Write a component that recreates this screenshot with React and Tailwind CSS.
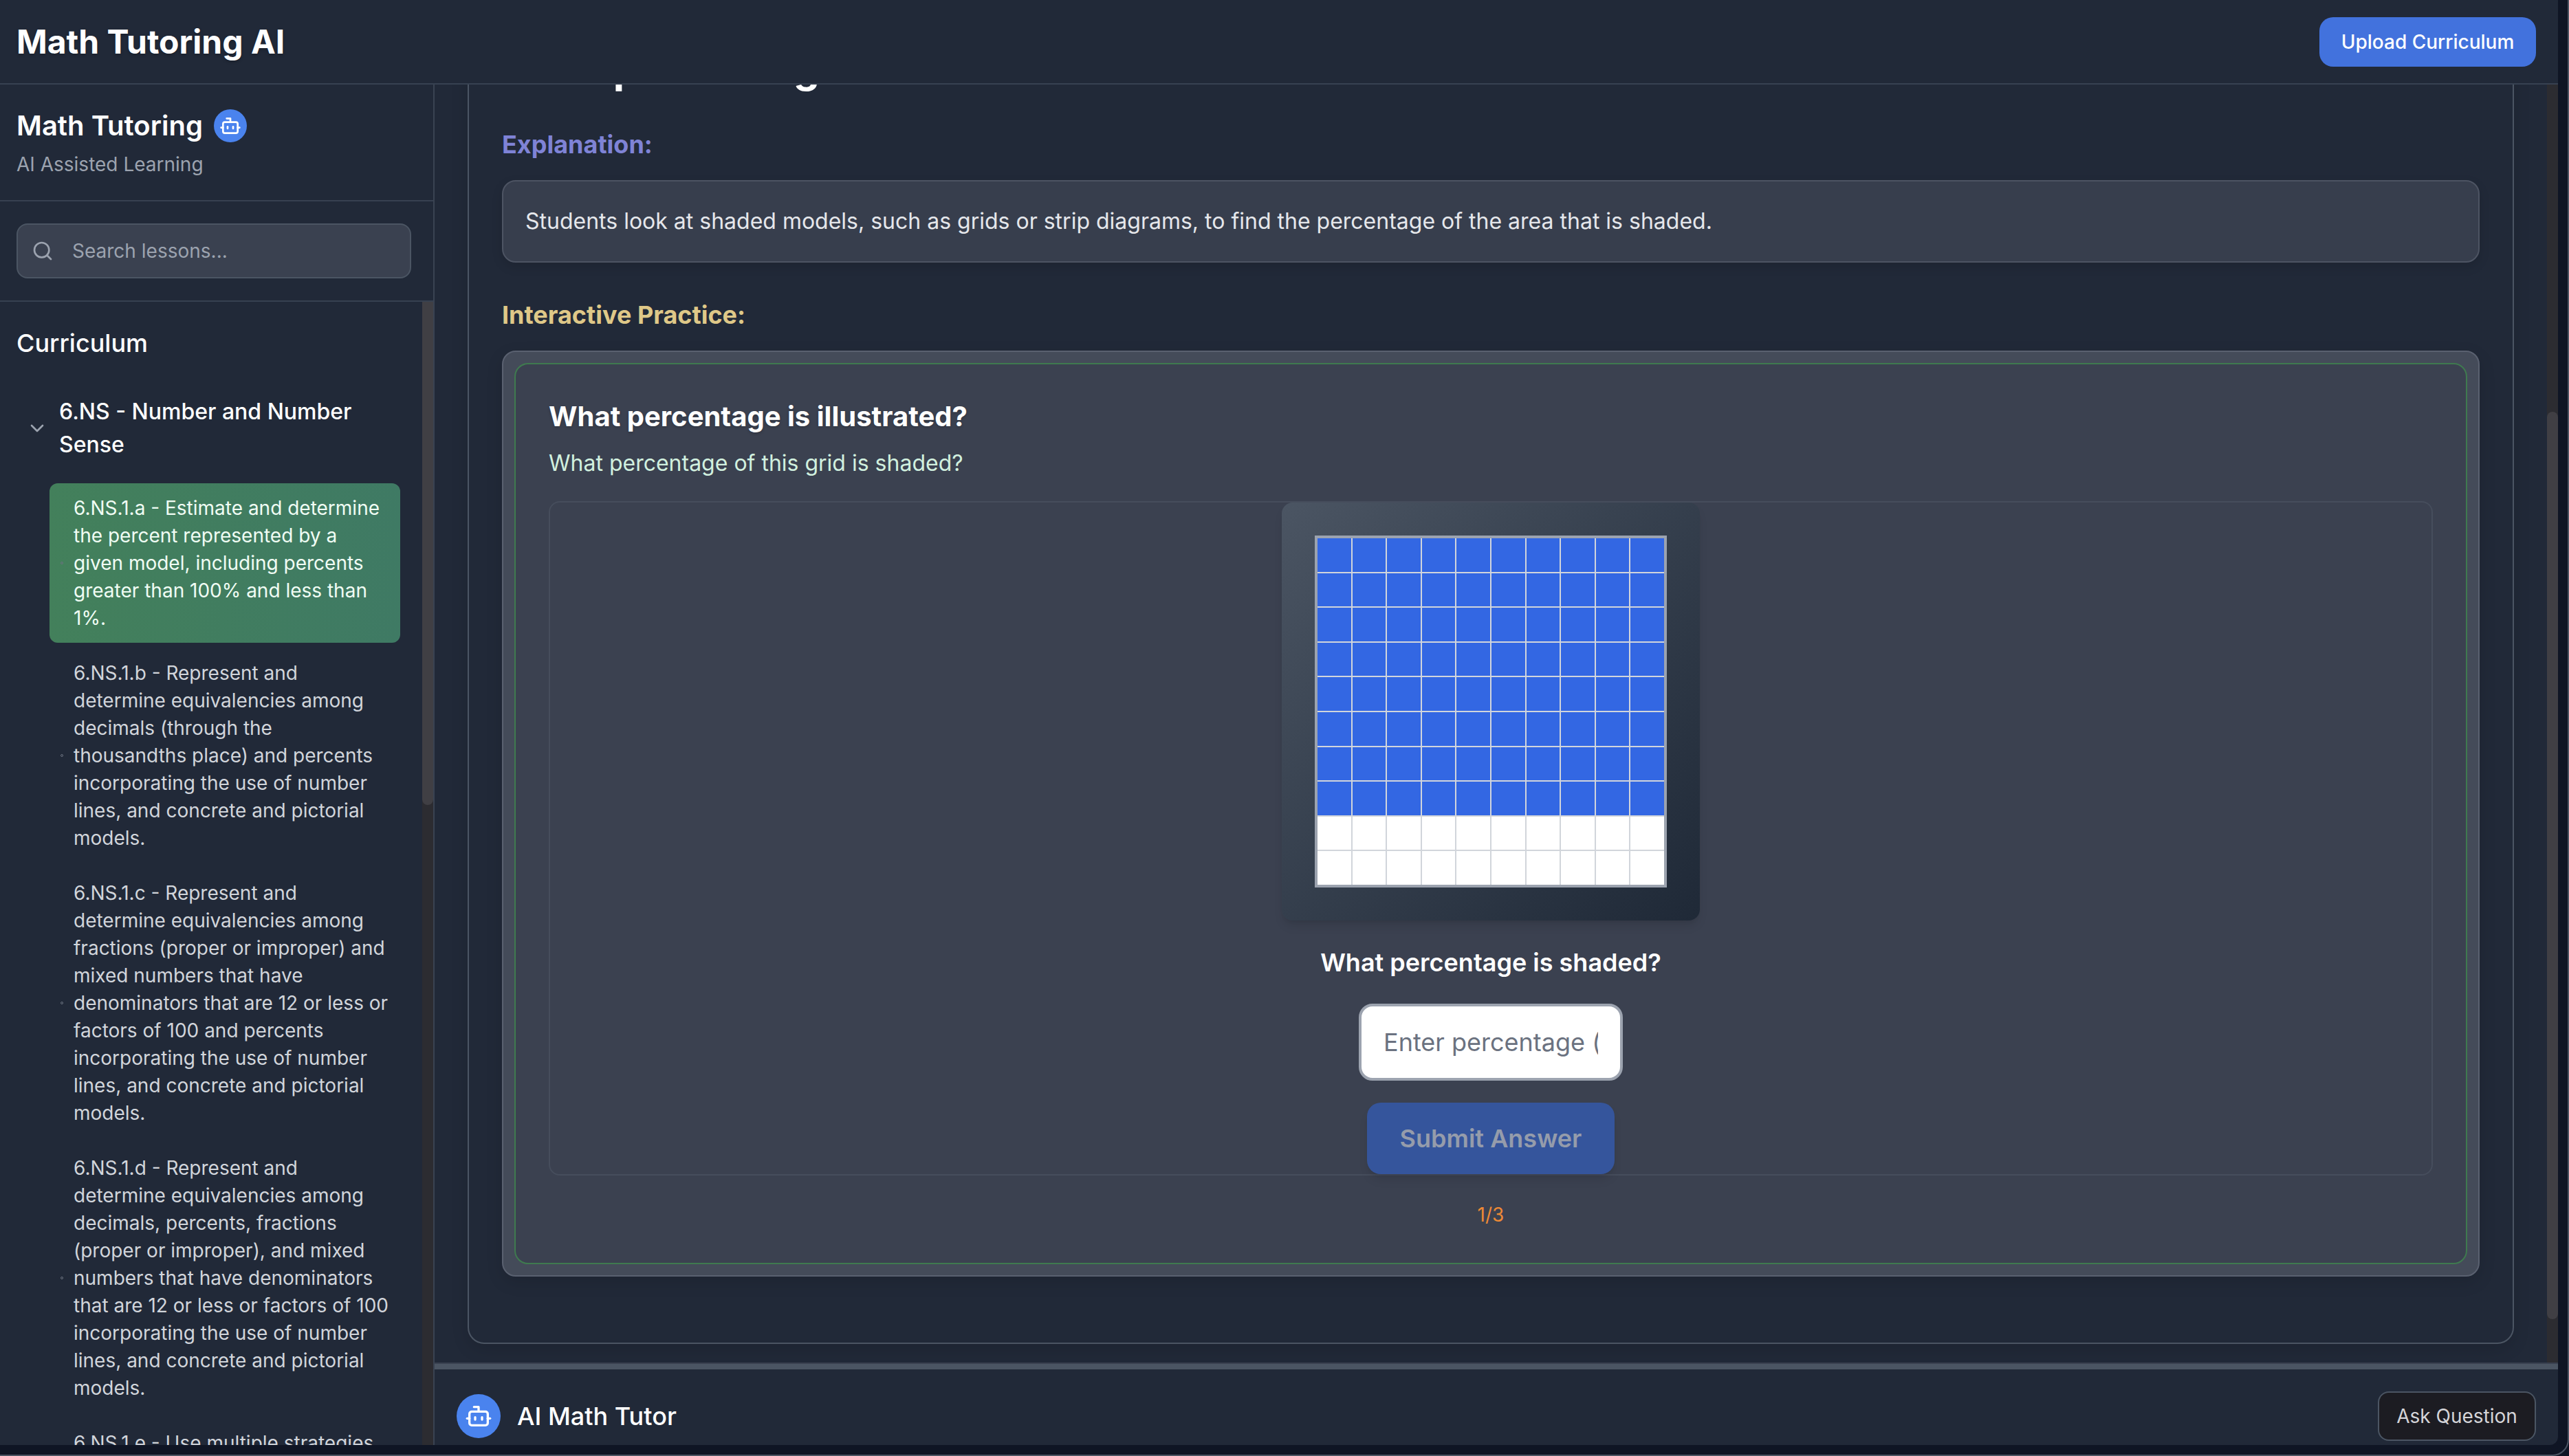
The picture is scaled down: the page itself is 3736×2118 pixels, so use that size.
import React from "react";
import { Bot, ChevronDown, Search } from "lucide-react";

const lessons = [
  "6.NS.1.a - Estimate and determine the percent represented by a given model, including percents greater than 100% and less than 1%.",
  "6.NS.1.b - Represent and determine equivalencies among decimals (through the thousandths place) and percents incorporating the use of number lines, and concrete and pictorial models.",
  "6.NS.1.c - Represent and determine equivalencies among fractions (proper or improper) and mixed numbers that have denominators that are 12 or less or factors of 100 and percents incorporating the use of number lines, and concrete and pictorial models.",
  "6.NS.1.d - Represent and determine equivalencies among decimals, percents, fractions (proper or improper), and mixed numbers that have denominators that are 12 or less or factors of 100 incorporating the use of number lines, and concrete and pictorial models.",
  "6.NS.1.e - Use multiple strategies to compare and order decimals, fractions and percents.",
];

const cells = Array.from({ length: 100 }, (_, i) => i);

const BotBadge = ({ box, icon }) => (
  <span className={`flex shrink-0 items-center justify-center rounded-full bg-[#4a83ee] text-white ${box}`}>
    <Bot className={icon} />
  </span>
);

const Sidebar = () => (
  <aside className="flex w-[632px] shrink-0 flex-col border-r-2 border-[#3a4352]">
    <div className="h-[170px] shrink-0 border-b-2 border-[#374151] pl-6 pt-8">
      <div className="flex h-14 items-center gap-4">
        <h2 className="text-[40px] leading-[56px] font-semibold text-white">Math Tutoring</h2>
        <BotBadge box="h-12 w-12" icon="h-8 w-8" />
      </div>
      <p className="mt-2 text-[28px] leading-10 text-[#9ca3af]">AI Assisted Learning</p>
    </div>

    <div className="h-[146px] shrink-0 border-b-2 border-[#374151] pb-8 pl-6 pr-8 pt-8">
      <div className="flex h-20 items-center gap-[27px] rounded-2xl border-2 border-[#4b5563] bg-[#3a4150] pl-5">
        <Search className="h-8 w-8 shrink-0 text-[#9ca3af]" />
        <span className="text-[28px] text-[#9ca3af]">Search lessons...</span>
      </div>
    </div>

    <div className="flex min-h-0 flex-1">
      <div className="min-w-0 flex-1 overflow-hidden">
        <h3 className="pl-6 pt-9 text-[36px] leading-[48px] font-medium text-white">Curriculum</h3>
        <div className="mt-[52px] flex items-center gap-4 pl-[38px] pr-4">
          <ChevronDown className="h-8 w-8 shrink-0 text-[#9ca3af]" />
          <span className="text-[32px] leading-[48px] font-medium text-white">6.NS - Number and Number Sense</span>
        </div>
        <ul className="mt-8 flex flex-col gap-2 pl-[72px] pr-8">
          {lessons.map((lesson, i) => (
            <li
              key={lesson}
              className={`flex items-center gap-[15px] rounded-xl py-4 pl-4 pr-[15px] text-[28px] leading-10 ${
                i === 0
                  ? "bg-gradient-to-r from-[#43805b] to-[#3f7a64] text-[#f0fdf4]"
                  : "text-[#d1d5db]"
              }`}
            >
              <span className="h-1 w-1 shrink-0 rounded-full border border-[#6b7280]" />
              <span>{lesson}</span>
            </li>
          ))}
        </ul>
      </div>
      <div className="w-4 shrink-0 bg-[#2c2c31]">
        <div className="h-[732px] rounded-b-lg bg-[#403f44]" />
      </div>
    </div>
  </aside>
);

const PercentGrid = () => (
  <div className="rounded-2xl bg-gradient-to-br from-[#4b5563] to-[#1f2937] p-12 shadow-lg">
    <div className="grid h-[512px] w-[512px] grid-cols-10 grid-rows-10 gap-0.5 border-4 border-[#9ca3af] bg-[#d1d5db]">
      {cells.map((cell) => (
        <div key={cell} className={cell < 80 ? "bg-[#3367e3]" : "bg-white"} />
      ))}
    </div>
  </div>
);

const Practice = () => (
  <div className="rounded-[20px] border-2 border-[#5a6170] bg-[#444b59] p-4 shadow-[0_8px_24px_rgba(0,0,0,0.12)]">
    <div className="rounded-[20px] border-2 border-[#3f7a4f] bg-[#3b4150] px-12 pb-[50px] pt-12">
      <h4 className="text-[40px] leading-[56px] font-bold text-white [text-shadow:0_2px_4px_rgba(0,0,0,0.2)]">
        What percentage is illustrated?
      </h4>
      <p className="mt-4 text-[32px] leading-[48px] text-[#d1f0df]">What percentage of this grid is shaded?</p>

      <div className="mt-[31px] flex flex-col items-center rounded-2xl border-2 border-[#464d5c]">
        <PercentGrid />
        <p className="mt-[37px] text-[36px] leading-[48px] font-semibold text-white">What percentage is shaded?</p>
        <input
          readOnly
          placeholder="Enter percentage (e.g., 80)"
          className="mt-9 h-28 w-96 rounded-[20px] border-4 border-[#9ca3af] bg-white px-8 text-[36px] text-[#111827] placeholder:text-[#6b7280] outline-none"
        />
        <button className="mt-8 h-[104px] w-[360px] rounded-[20px] bg-[#35559c] text-[36px] font-semibold text-[#959cab] shadow-lg">
          Submit Answer
        </button>
      </div>

      <p className="mt-[37px] text-center text-[28px] leading-10 text-[#ed8936]">1/3</p>
    </div>
  </div>
);

const Lesson = () => (
  <div className="min-w-0 flex-1 overflow-hidden">
    {/* scrolled down, the title sits behind the app header */}
    <div className="mx-12 -mt-[111px] rounded-3xl border-2 border-[#4b5563] px-12 pb-24 pt-12 shadow-[0_8px_24px_rgba(0,0,0,0.12)]">
      <h3 className="text-[60px] leading-[72px] font-bold text-white">Read percentages</h3>

      <h4 className="mt-[52px] text-[36px] leading-[48px] font-bold text-[#7f83d6]">Explanation:</h4>
      <div className="mt-7 flex h-[120px] items-center rounded-[20px] border-2 border-[#4d5463] bg-[#373e4d] px-8 shadow-[0_6px_16px_rgba(0,0,0,0.12)]">
        <p className="text-[32px] text-[#e5e7eb]">
          Students look at shaded models, such as grids or strip diagrams, to find the percentage of the area that is shaded.
        </p>
      </div>

      <h4 className="mt-[52px] text-[36px] leading-[48px] font-bold text-[#dfc888]">Interactive Practice:</h4>
      <div className="mt-7">
        <Practice />
      </div>
    </div>
  </div>
);

export default function App() {
  return (
    <div className="h-[2118px] w-[3736px] overflow-hidden bg-[#0f1524] font-['Inter',sans-serif]">
      <div className="h-full rounded-br-3xl border-b-2 border-r-2 border-[#4b5563] pb-3.5 pr-3.5">
        <div className="flex h-full flex-col overflow-hidden rounded-br-xl bg-[#212938]">
          <header className="relative z-10 flex h-[123px] shrink-0 items-center justify-between border-b-2 border-[#374151] bg-[#212938] pl-6 pr-8">
            <h1 className="text-[48px] font-bold text-white [text-shadow:0_2px_4px_rgba(0,0,0,0.25)]">Math Tutoring AI</h1>
            <button className="h-[72px] w-[315px] rounded-[20px] bg-[#4272dd] text-[28px] font-medium text-white">
              Upload Curriculum
            </button>
          </header>

          <div className="flex min-h-0 flex-1">
            <Sidebar />

            <main className="flex min-w-0 flex-1 flex-col">
              <div className="flex min-h-0 flex-1">
                <Lesson />
                <div className="w-4 shrink-0 bg-[#2c2c31]">
                  <div className="mt-[476px] h-[1320px] rounded-lg bg-[#403f44]" />
                </div>
              </div>

              <div className="h-[120px] shrink-0 border-t-2 border-[#39404f]">
                <div className="h-2 bg-[#4b5563]" />
                <div className="mt-8 flex h-[72px] items-center justify-between pl-8 pr-8">
                  <div className="flex items-center gap-6">
                    <BotBadge box="h-16 w-16" icon="h-10 w-10" />
                    <span className="text-[36px] font-medium text-white">AI Math Tutor</span>
                  </div>
                  <button className="h-[72px] w-[230px] rounded-2xl border-2 border-[#4b5563] bg-[#1c1c22] text-[28px] text-[#d4d4d8]">
                    Ask Question
                  </button>
                </div>
              </div>
            </main>
          </div>
        </div>
      </div>
    </div>
  );
}
